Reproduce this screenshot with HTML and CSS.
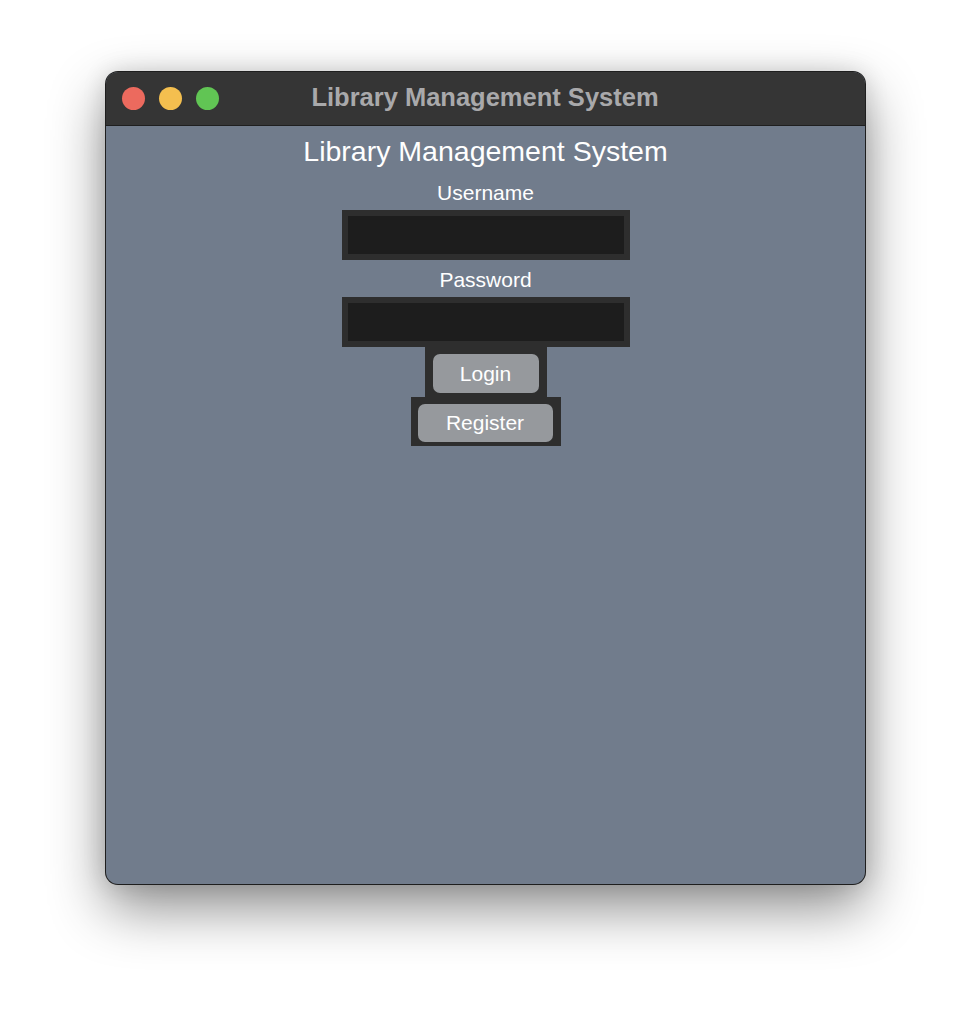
FILE: index.html
```html
<!DOCTYPE html>
<html>
<head>
<meta charset="utf-8">
<link rel="stylesheet" href="styles.css">
</head>
<body>
<div class="desk">
  <div class="window">
    <div class="titlebar">
      <div class="lights">
        <span class="light red"></span>
        <span class="light yellow"></span>
        <span class="light green"></span>
      </div>
      <div class="wtitle">Library Management System</div>
    </div>
    <div class="content">
      <div class="heading">Library Management System</div>
      <div class="label first">Username</div>
      <div class="entry"><div class="entry-in"></div></div>
      <div class="label">Password</div>
      <div class="entry"><div class="entry-in"></div></div>
      <div class="btnframe login"><div class="btn">Login</div></div>
      <div class="btnframe register"><div class="btn">Register</div></div>
    </div>
  </div>
</div>
</body>
</html>
```

FILE: styles.css
```css
html, body {
  margin: 0;
  padding: 0;
  background: #ffffff;
}
.desk {
  padding: 72px 0 0 106px;
  height: 1024px;
  box-sizing: border-box;
}
.window {
  width: 759px;
  height: 812px;
  border-radius: 12px;
  overflow: hidden;
  background: #717c8c;
  box-shadow: 0 0 0 1px #1e1e1e, 0 24px 56px rgba(0,0,0,0.45), 0 0 24px rgba(0,0,0,0.14);
  display: flex;
  flex-direction: column;
  font-family: "Liberation Sans", Arial, sans-serif;
}
.titlebar {
  height: 54px;
  background: #353535;
  border-bottom: 1px solid #1f1f1f;
  box-sizing: border-box;
  position: relative;
  display: flex;
  align-items: center;
  justify-content: center;
}
.lights {
  position: absolute;
  left: 16px;
  top: 15px;
  display: flex;
  gap: 14px;
}
.light {
  width: 23px;
  height: 23px;
  border-radius: 50%;
  display: block;
}
.red { background: #ec6a5e; }
.yellow { background: #f4bf4f; }
.green { background: #61c554; }
.wtitle {
  color: #a9a9ab;
  font-weight: bold;
  font-size: 25.5px;
  margin-left: -1px;
  margin-top: -2px;
}
.content {
  flex: 1;
  display: flex;
  flex-direction: column;
  align-items: center;
  color: #ffffff;
}
.heading {
  margin-top: 8px;
  font-size: 28.5px;
  line-height: 34px;
}
.label {
  margin-top: 8px;
  font-size: 21px;
  line-height: 24px;
  margin-bottom: 5px;
}
.label.first {
  margin-top: 13px;
}
.entry {
  width: 288px;
  height: 50px;
  box-sizing: border-box;
  background: #2e2e2e;
  padding: 6px;
}
.entry-in {
  width: 100%;
  height: 100%;
  background: #1d1d1d;
}
.btnframe {
  background: #2e2e2e;
  box-sizing: border-box;
  padding: 7px 8px 4px 8px;
}
.login {
  width: 122px;
  height: 50px;
}
.register {
  width: 150px;
  height: 49px;
  padding: 7px 8px 4px 7px;
}
.btn {
  height: 100%;
  background: #96999d;
  border-radius: 7px;
  display: flex;
  align-items: center;
  justify-content: center;
  font-size: 21px;
  color: #ffffff;
}
```
